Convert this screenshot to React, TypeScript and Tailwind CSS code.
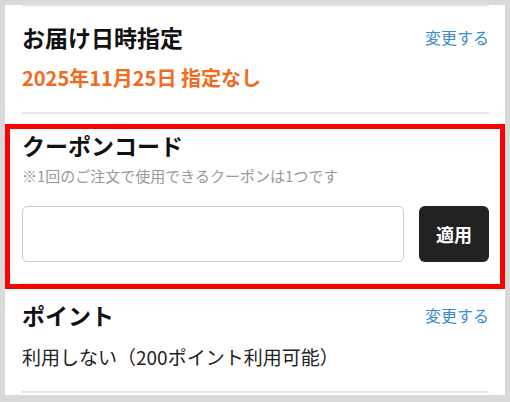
import React from 'react';

const font = { fontFamily: '"Noto Sans CJK JP", "Noto Sans", sans-serif' };

const ChangeLink: React.FC = () => (
  <a href="#" className="text-[16px] leading-[30px] text-[#3a8ccf] no-underline">
    変更する
  </a>
);

const App: React.FC = () => {
  return (
    <div
      className="w-[510px] h-[402px] bg-[#d9d9d9] pt-[5px] pl-[5px] pr-[5px] pb-[7px]"
      style={font}
    >
      <div className="h-full bg-white">
        {/* delivery date */}
        <div className="mx-[17px] mr-[16px] border-t-2 border-[#eeeeee] pt-[15px] pb-[20px] border-b-2 border-b-[#e5e5e5]">
          <div className="flex items-center justify-between">
            <h2 className="text-[23px] leading-[30px] font-bold text-[#111]">お届け日時指定</h2>
            <ChangeLink />
          </div>
          <p className="mt-[12px] text-[20px] leading-[28px] font-bold text-[#f36a1c]">
            2025年11月25日 指定なし
          </p>
        </div>

        {/* coupon */}
        <div className="mt-[10px] border-[5px] border-[#ff0000]">
          <div className="ml-[12px] mr-[11px] pt-[1px] pb-[21px] border-b border-[#e5e5e5]">
            <h2 className="text-[23px] leading-[30px] font-bold text-[#111]">クーポンコード</h2>
            <p className="mt-[6px] text-[15px] leading-[20px] text-[#999]">
              ※1回のご注文で使用できるクーポンは1つです
            </p>
            <div className="mt-[20px] flex gap-[15px]">
              <input
                type="text"
                className="flex-1 h-[56px] border border-[#cccccc] rounded-[5px] px-3 outline-none"
              />
              <button className="w-[70px] h-[56px] rounded-[6px] bg-[#222222] text-white text-[18px] font-bold">
                適用
              </button>
            </div>
          </div>
        </div>

        {/* points */}
        <div className="ml-[17px] mr-[16px] pt-[11px] pb-[20px] border-b-2 border-[#e5e5e5]">
          <div className="flex items-center justify-between">
            <h2 className="text-[23px] leading-[30px] font-bold text-[#111]">ポイント</h2>
            <ChangeLink />
          </div>
          <p className="mt-[13px] text-[19px] leading-[28px] text-[#222]">
            利用しない（200ポイント利用可能）
          </p>
        </div>
      </div>
    </div>
  );
};

export default App;
